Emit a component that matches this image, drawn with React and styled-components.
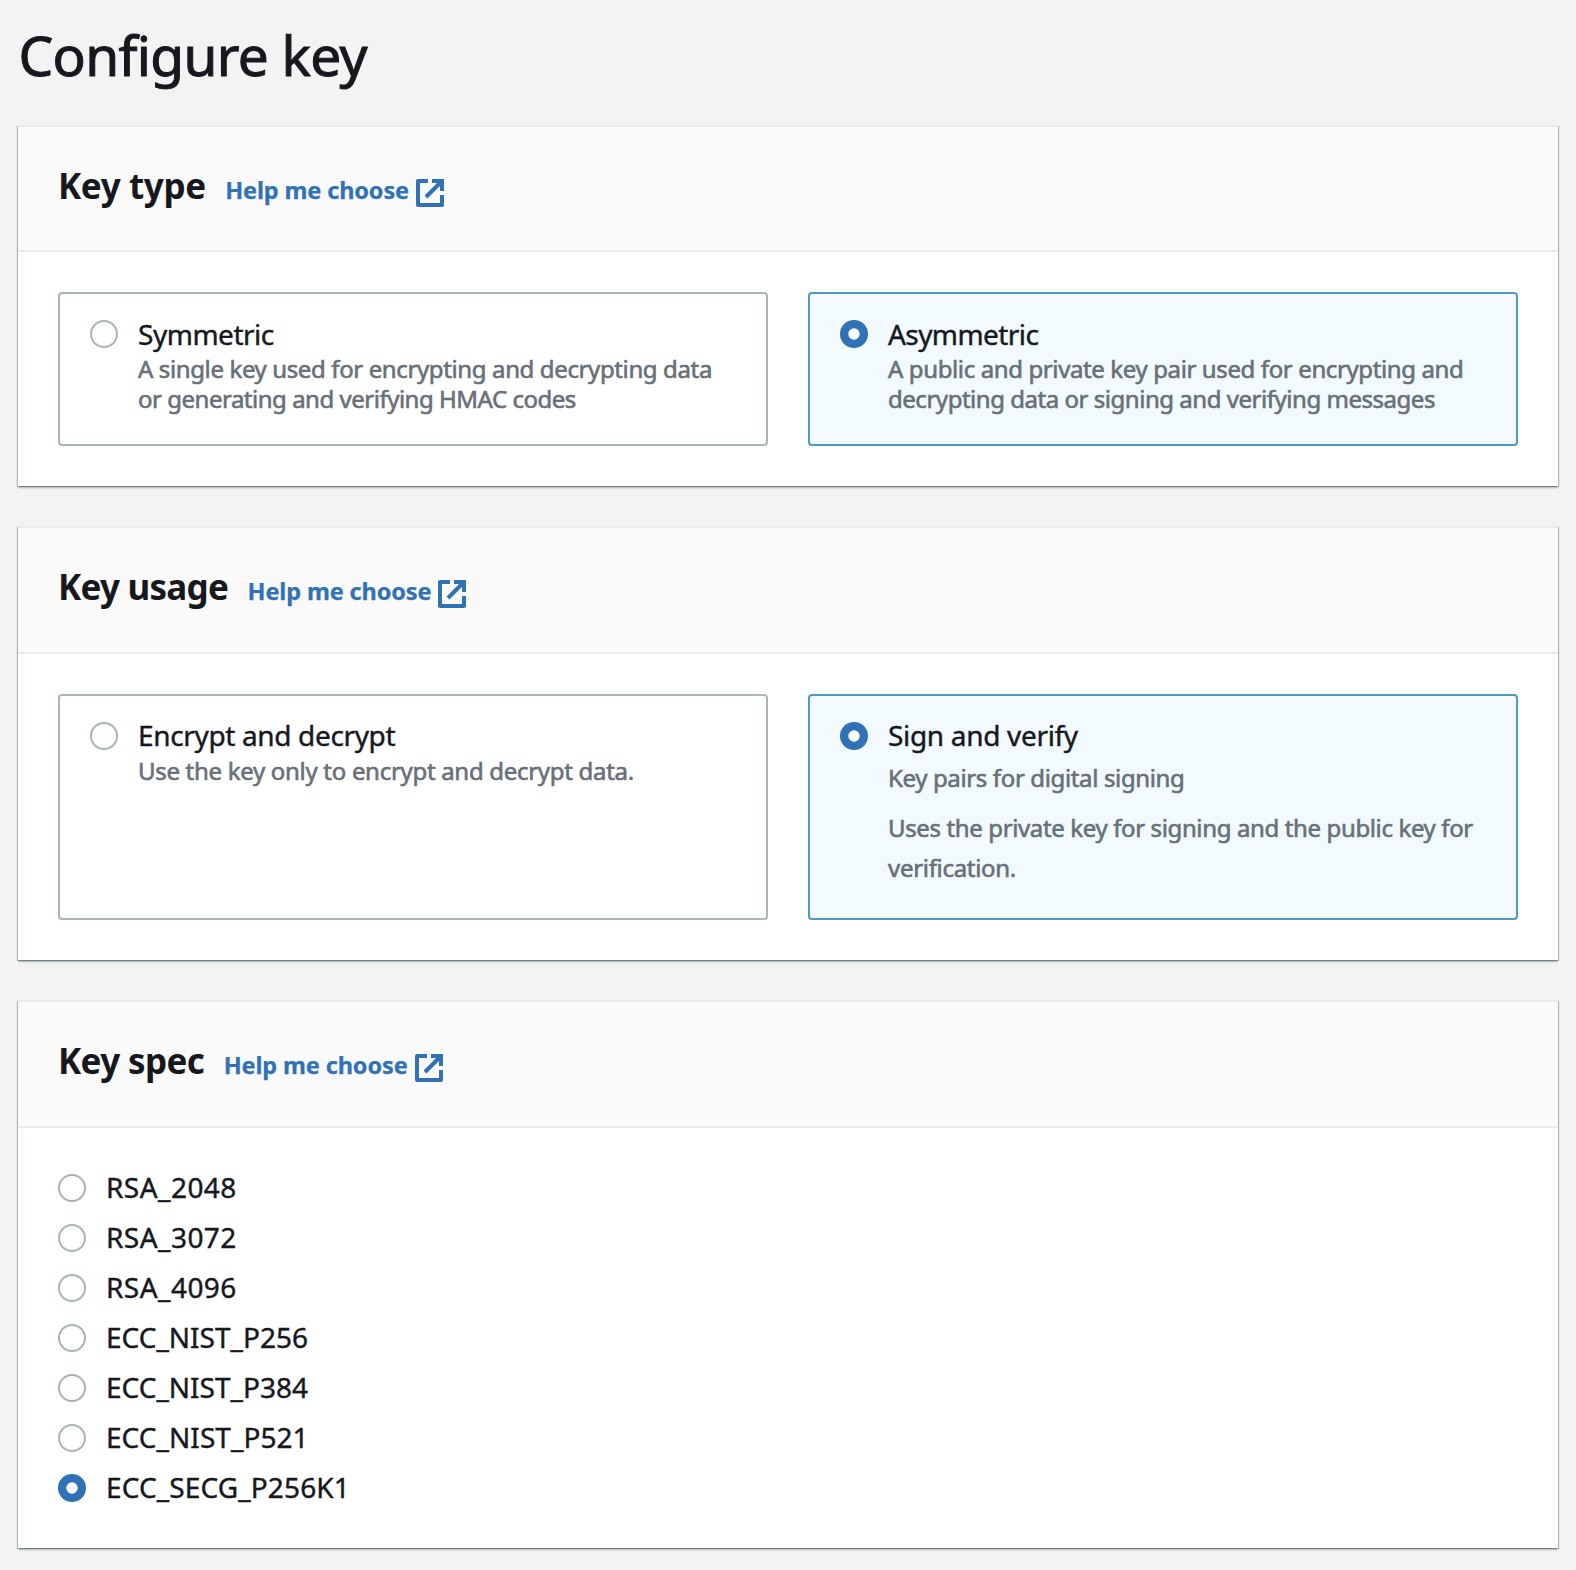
import React, { useState } from "react";
import styled, { createGlobalStyle } from "styled-components";

const GlobalStyle = createGlobalStyle`
  *, *::before, *::after { box-sizing: border-box; }
  body {
    margin: 0;
    background: #f3f3f3;
    color: #16181e;
    font-family: "Noto Sans", "Open Sans", sans-serif;
  }
`;

const Page = styled.main`
  display: flex;
  flex-direction: column;
  gap: 40px;
  width: 1576px;
  min-height: 1570px;
  padding: 19px 18px 22px;
`;

const PageTitle = styled.h1`
  margin: 0 0 -6px;
  height: 72px;
  font-size: 55px;
  line-height: 72px;
  font-weight: 400;
  letter-spacing: -0.68px;
  text-indent: 0.5px;
  -webkit-text-stroke: 1px currentColor;
`;

const Panel = styled.section`
  width: 1540px;
  border-top: 2px solid #eaebec;
  background: #fff;
  box-shadow:
    0 2px 2px 0 rgba(0, 28, 36, 0.24),
    1px 1px 1px 0 rgba(0, 28, 36, 0.22),
    -1px 1px 1px 0 rgba(0, 28, 36, 0.22);
`;

const PanelHeader = styled.header`
  display: flex;
  align-items: baseline;
  height: ${(p) => p.$height}px;
  padding: 37px 40px 0;
  border-bottom: 2px solid #eaebec;
  background: #fafafa;
`;

const PanelTitle = styled.h2`
  margin: 0 19.5px 0 0;
  font-size: 35px;
  line-height: 44px;
  font-weight: 700;
  letter-spacing: ${(p) => p.$tracking}px;
`;

const HelpLink = styled.a`
  display: flex;
  align-items: baseline;
  gap: 7px;
  color: #3072b5;
  font-size: 23.5px;
  line-height: 32px;
  font-weight: 700;
  letter-spacing: -0.13px;
  text-decoration: none;
  cursor: pointer;
  -webkit-text-stroke: 0.25px currentColor;
`;

const ExternalSvg = styled.svg`
  align-self: flex-start;
  width: 28px;
  height: 28px;
  margin-top: 5px;
  fill: none;
  stroke: currentColor;
  stroke-width: 2;
  stroke-linejoin: round;
`;

const Tiles = styled.div`
  display: grid;
  grid-template-columns: 1fr 1fr;
  gap: 40px;
  padding: 40px;
`;

const Tile = styled.div`
  display: flex;
  gap: 20px;
  padding: 26px 30px 30px;
  border: 2px solid ${(p) => (p.$selected ? "#4d9cbf" : "#a9b7b6")};
  border-radius: 4px;
  background: ${(p) => (p.$selected ? "#f2fafd" : "#fff")};
  cursor: pointer;
`;

const TileText = styled.div`
  display: flex;
  flex-direction: column;
`;

const TileTitle = styled.div`
  height: 28px;
  font-size: 28px;
  line-height: ${(p) => p.$lineHeight}px;
  letter-spacing: ${(p) => p.$tracking}px;
  white-space: nowrap;
  -webkit-text-stroke: 0.4px currentColor;
`;

const Description = styled.div`
  display: flex;
  flex-direction: column;
  gap: ${(p) => (p.$spacious ? 10 : 0)}px;
  margin-top: ${(p) => (p.$spacious ? 8 : 6)}px;
  color: #687078;
  font-size: 24px;
  line-height: ${(p) => (p.$spacious ? 40 : 30)}px;
  -webkit-text-stroke: 0.6px currentColor;
`;

const Paragraph = styled.p`
  margin: 0;
`;

const TextLine = styled.span`
  display: block;
  white-space: nowrap;
  letter-spacing: ${(p) => p.$tracking}px;
`;

const RadioSvg = styled.svg`
  flex: none;
  width: 28px;
  height: 28px;
`;

const OptionList = styled.div`
  display: flex;
  flex-direction: column;
  gap: 22px;
  padding: 46px 40px;
`;

const Option = styled.div`
  display: flex;
  gap: 20px;
  height: 28px;
  cursor: pointer;
`;

const OptionLabel = styled.span`
  font-size: 28px;
  line-height: 26px;
  letter-spacing: ${(p) => p.$tracking}px;
  -webkit-text-stroke: 0.4px currentColor;
`;

function Radio({ checked }) {
  return (
    <RadioSvg viewBox="0 0 28 28" role="radio" aria-checked={checked}>
      {checked ? (
        <>
          <circle cx="14" cy="14" r="14" fill="#3072b5" />
          <circle cx="14" cy="14" r="5.7" fill="#fff" />
        </>
      ) : (
        <circle cx="14" cy="14" r="13" fill="#fff" stroke="#a9b5b6" strokeWidth="2" />
      )}
    </RadioSvg>
  );
}

function Header({ title, tracking, height = 126 }) {
  return (
    <PanelHeader $height={height}>
      <PanelTitle $tracking={tracking}>{title}</PanelTitle>
      <HelpLink>
        Help me choose
        <ExternalSvg viewBox="1 1 14 14">
          <path d="M9 2h5v5" strokeLinejoin="miter" />
          <path d="M6 10l8-8" />
          <path d="M14 9v5H2V2h5" />
        </ExternalSvg>
      </HelpLink>
    </PanelHeader>
  );
}

const keyTypes = [
  {
    title: "Symmetric",
    tracking: -0.48,
    paragraphs: [
      [
        ["A single key used for encrypting and decrypting data", -0.376],
        ["or generating and verifying HMAC codes", -0.485],
      ],
    ],
  },
  {
    title: "Asymmetric",
    tracking: -0.58,
    paragraphs: [
      [
        ["A public and private key pair used for encrypting and", -0.38],
        ["decrypting data or signing and verifying messages", -0.467],
      ],
    ],
  },
];

const keyUsages = [
  {
    title: "Encrypt and decrypt",
    tracking: -0.35,
    titleLineHeight: 26,
    paragraphs: [[["Use the key only to encrypt and decrypt data.", -0.3]]],
  },
  {
    title: "Sign and verify",
    tracking: -0.32,
    titleLineHeight: 26,
    spacious: true,
    paragraphs: [
      [["Key pairs for digital signing", -0.36]],
      [
        ["Uses the private key for signing and the public key for", -0.37],
        ["verification.", -0.3],
      ],
    ],
  },
];

const keySpecs = [
  ["RSA_2048", 0.45],
  ["RSA_3072", 0.45],
  ["RSA_4096", 0.45],
  ["ECC_NIST_P256", 0],
  ["ECC_NIST_P384", 0],
  ["ECC_NIST_P521", 0.05],
  ["ECC_SECG_P256K1", 0.12],
];

function TileGroup({ items, value, onChange }) {
  return (
    <Tiles role="radiogroup">
      {items.map((item) => (
        <Tile
          key={item.title}
          $selected={item.title === value}
          onClick={() => onChange(item.title)}
        >
          <Radio checked={item.title === value} />
          <TileText>
            <TileTitle $tracking={item.tracking} $lineHeight={item.titleLineHeight || 28}>
              {item.title}
            </TileTitle>
            <Description $spacious={item.spacious}>
              {item.paragraphs.map((lines, i) => (
                <Paragraph key={i}>
                  {lines.map(([text, tracking]) => (
                    <TextLine key={text} $tracking={tracking}>
                      {text}
                    </TextLine>
                  ))}
                </Paragraph>
              ))}
            </Description>
          </TileText>
        </Tile>
      ))}
    </Tiles>
  );
}

export default function App() {
  const [keyType, setKeyType] = useState("Asymmetric");
  const [usage, setUsage] = useState("Sign and verify");
  const [spec, setSpec] = useState("ECC_SECG_P256K1");

  return (
    <>
      <GlobalStyle />
      <Page>
        <PageTitle>Configure key</PageTitle>
        <Panel>
          <Header title="Key type" tracking={-0.38} height={125} />
          <TileGroup items={keyTypes} value={keyType} onChange={setKeyType} />
        </Panel>
        <Panel>
          <Header title="Key usage" tracking={-0.75} />
          <TileGroup items={keyUsages} value={usage} onChange={setUsage} />
        </Panel>
        <Panel>
          <Header title="Key spec" tracking={-0.62} />
          <OptionList role="radiogroup">
            {keySpecs.map(([name, tracking]) => (
              <Option key={name} onClick={() => setSpec(name)}>
                <Radio checked={name === spec} />
                <OptionLabel $tracking={tracking}>{name}</OptionLabel>
              </Option>
            ))}
          </OptionList>
        </Panel>
      </Page>
    </>
  );
}
